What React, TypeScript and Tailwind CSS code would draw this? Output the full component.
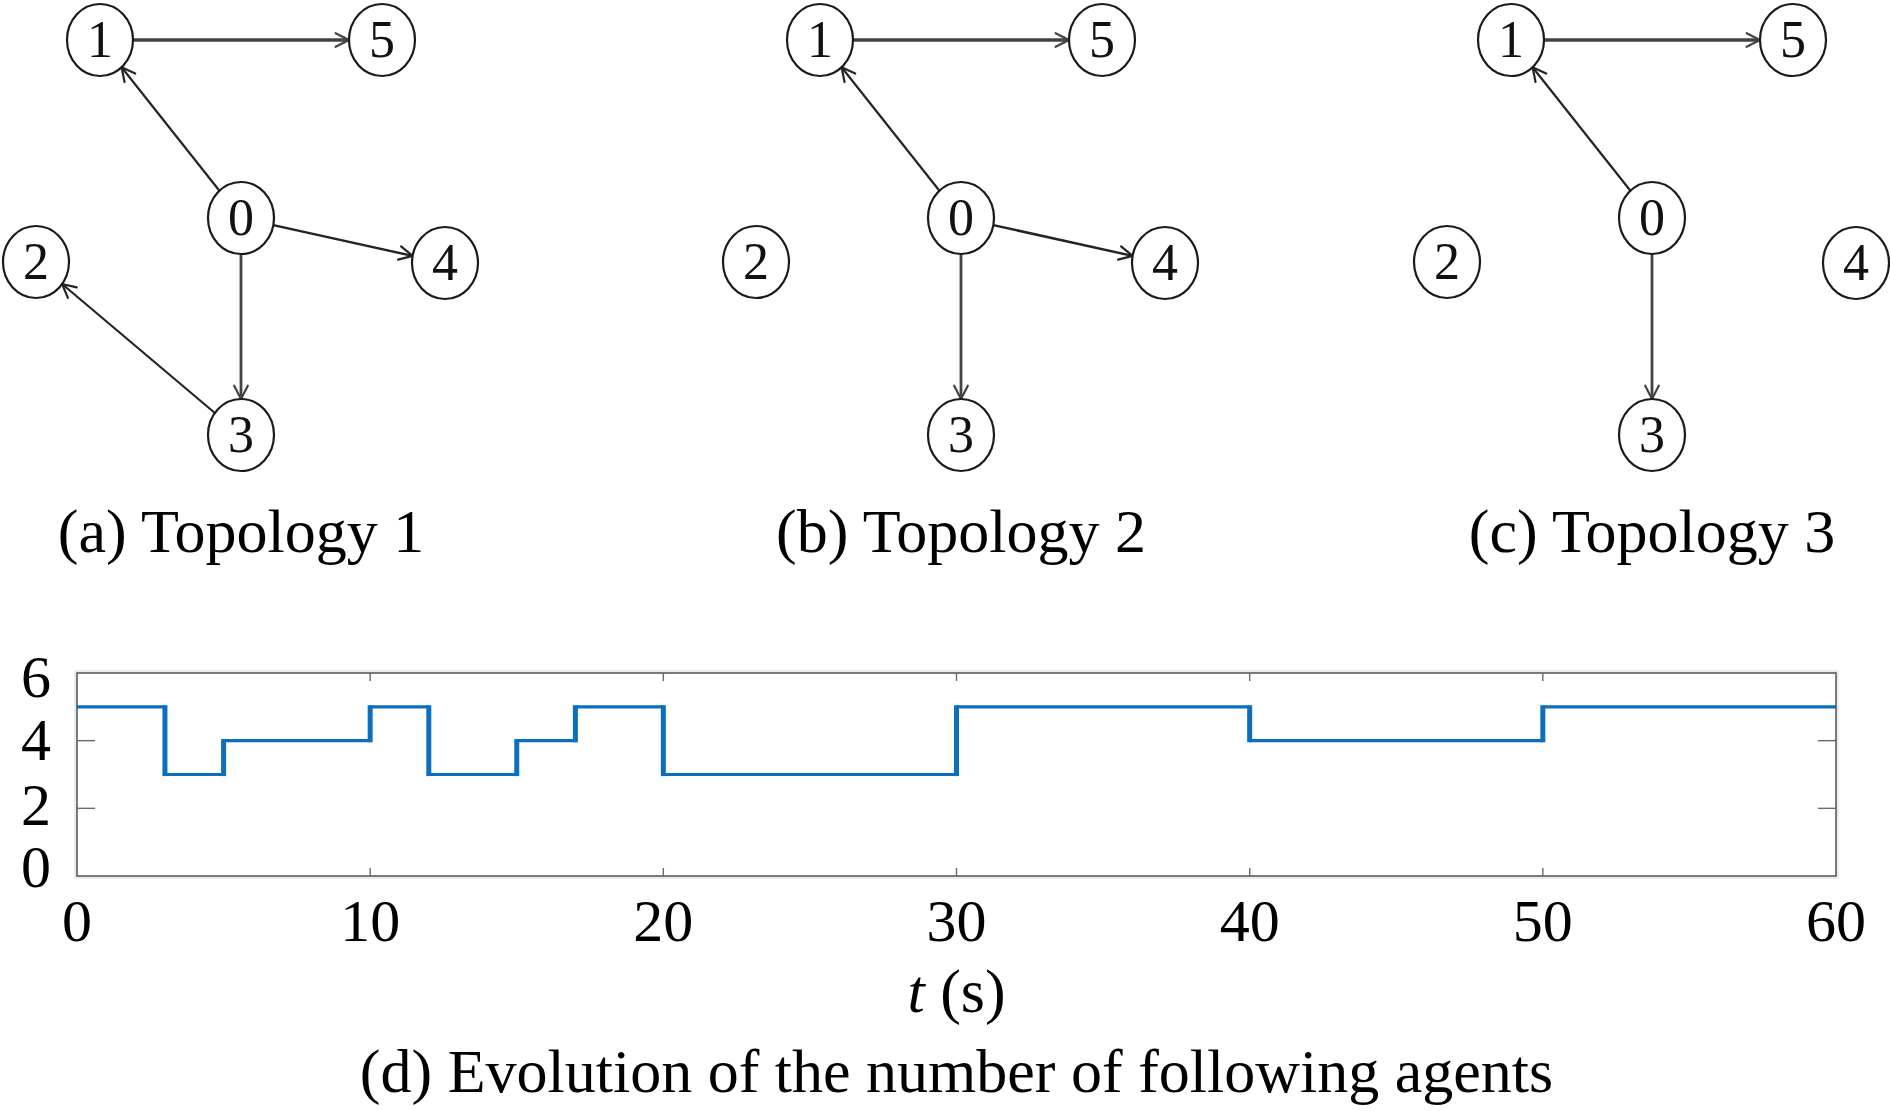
import React from "react";

type P = { x: number; y: number };
const RX = 33;
const RY = 36;

const NODES: Record<string, P> = {
  "1": { x: 100, y: 40 },
  "5": { x: 382, y: 40 },
  "0": { x: 241, y: 218 },
  "2": { x: 36, y: 262 },
  "4": { x: 445, y: 263 },
  "3": { x: 241, y: 435 },
};

function boundary(c: P, t: P): P {
  const dx = t.x - c.x;
  const dy = t.y - c.y;
  const k = 1 / Math.sqrt((dx / RX) ** 2 + (dy / RY) ** 2);
  return { x: c.x + dx * k, y: c.y + dy * k };
}

type E = { from: string; to: string; w: number; c: string };

function Edge({ e }: { e: E }) {
  const a = NODES[e.from];
  const b = NODES[e.to];
  const s = boundary(a, b);
  const t = boundary(b, a);
  const ang = Math.atan2(t.y - s.y, t.x - s.x);
  const L = 15;
  const sp = (27 * Math.PI) / 180;
  const p1 = { x: t.x - L * Math.cos(ang - sp), y: t.y - L * Math.sin(ang - sp) };
  const p2 = { x: t.x - L * Math.cos(ang + sp), y: t.y - L * Math.sin(ang + sp) };
  return (
    <g stroke={e.c} strokeWidth={e.w} fill="none" strokeLinecap="round">
      <line x1={s.x} y1={s.y} x2={t.x} y2={t.y} />
      <polyline points={`${p1.x},${p1.y} ${t.x},${t.y} ${p2.x},${p2.y}`} strokeWidth={2.2} strokeLinejoin="round" />
    </g>
  );
}

function Graph({ edges }: { edges: E[] }) {
  return (
    <svg width={482} height={500} className="block overflow-visible">
      {edges.map((e, i) => (
        <Edge key={i} e={e} />
      ))}
      {Object.entries(NODES).map(([k, p]) => (
        <g key={k}>
          <ellipse cx={p.x} cy={p.y} rx={RX} ry={RY} fill="white" stroke="#1a1a1a" strokeWidth={2.2} />
          <text
            x={p.x}
            y={p.y + 17}
            textAnchor="middle"
            fontSize={52}
            fontFamily="'Liberation Serif', 'Times New Roman', serif"
            fill="#111"
          >
            {k}
          </text>
        </g>
      ))}
    </svg>
  );
}

const THIN = "#242424";
const THICK = "#444444";

const EDGES_A: E[] = [
  { from: "1", to: "5", w: 3.6, c: THICK },
  { from: "0", to: "1", w: 2.2, c: THIN },
  { from: "0", to: "4", w: 2.5, c: THIN },
  { from: "0", to: "3", w: 2.8, c: THICK },
  { from: "3", to: "2", w: 2.2, c: THIN },
];
const EDGES_B: E[] = [
  { from: "1", to: "5", w: 3.6, c: THICK },
  { from: "0", to: "1", w: 2.2, c: THIN },
  { from: "0", to: "4", w: 2.5, c: THIN },
  { from: "0", to: "3", w: 2.8, c: THICK },
];
const EDGES_C: E[] = [
  { from: "1", to: "5", w: 3.6, c: THICK },
  { from: "0", to: "1", w: 2.2, c: THIN },
  { from: "0", to: "3", w: 2.8, c: THICK },
];

function Panel({ edges, caption, className }: { edges: E[]; caption: string; className: string }) {
  return (
    <div className={`flex w-[482px] shrink-0 flex-col items-center ${className}`}>
      <Graph edges={edges} />
      <div className="whitespace-nowrap text-[62px] leading-none">{caption}</div>
    </div>
  );
}

const X0 = 77;
const X1 = 1836;
const YT = 73;
const YB = 276;
const xs = (t: number) => X0 + ((X1 - X0) * t) / 60;
const ys = (v: number) => YB - ((YB - YT) * v) / 6;

const STEPS: [number, number, number][] = [
  [0, 3, 5],
  [3, 5, 3],
  [5, 10, 4],
  [10, 12, 5],
  [12, 15, 3],
  [15, 17, 4],
  [17, 20, 5],
  [20, 30, 3],
  [30, 40, 5],
  [40, 50, 4],
  [50, 60, 5],
];

function Chart() {
  const blue = "#0b6fbd";
  const font = "'Liberation Serif', 'Times New Roman', serif";
  return (
    <svg width={1890} height={360} className="block">
      <rect x={X0} y={YT} width={X1 - X0} height={YB - YT} fill="none" stroke="#ececec" strokeWidth={6} />
      <rect x={X0} y={YT} width={X1 - X0} height={YB - YT} fill="white" stroke="#5a5a5a" strokeWidth={1.6} />
      {[2, 4].map((v) => (
        <g key={v} stroke="#6a6a6a" strokeWidth={1.4}>
          <line x1={X0} y1={ys(v)} x2={X0 + 18} y2={ys(v)} />
          <line x1={X1 - 18} y1={ys(v)} x2={X1} y2={ys(v)} />
        </g>
      ))}
      {[10, 20, 30, 40, 50].map((t) => (
        <g key={t} stroke="#6a6a6a" strokeWidth={1.4}>
          <line x1={xs(t)} y1={YT} x2={xs(t)} y2={YT + 8} />
          <line x1={xs(t)} y1={YB - 8} x2={xs(t)} y2={YB} />
        </g>
      ))}
      {STEPS.map(([a, b, v], i) => (
        <line key={`h${i}`} x1={xs(a)} y1={ys(v)} x2={xs(b)} y2={ys(v)} stroke={blue} strokeWidth={3.2} />
      ))}
      {STEPS.slice(1).map(([a, , v], i) => (
        <line
          key={`v${i}`}
          x1={xs(a)}
          y1={ys(STEPS[i][2]) + (v > STEPS[i][2] ? 1.6 : -1.6)}
          x2={xs(a)}
          y2={ys(v) + (v > STEPS[i][2] ? -1.6 : 1.6)}
          stroke={blue}
          strokeWidth={5}
        />
      ))}
      {[
        ["6", 97],
        ["4", 160],
        ["2", 225],
        ["0", 287],
      ].map(([l, y]) => (
        <text key={l} x={36} y={y as number} textAnchor="middle" fontSize={60} fontFamily={font} fill="#000">
          {l}
        </text>
      ))}
      {[0, 10, 20, 30, 40, 50, 60].map((t) => (
        <text key={t} x={xs(t)} y={341} textAnchor="middle" fontSize={60} fontFamily={font} fill="#000">
          {t}
        </text>
      ))}
    </svg>
  );
}

export default function App() {
  return (
    <div className="h-[1111px] w-[1890px] overflow-hidden bg-white font-['Liberation_Serif','Times_New_Roman',serif] text-black">
      <div className="flex">
        <Panel edges={EDGES_A} caption="(a) Topology 1" className="" />
        <Panel edges={EDGES_B} caption="(b) Topology 2" className="ml-[238px]" />
        <Panel edges={EDGES_C} caption="(c) Topology 3" className="ml-[209px]" />
      </div>
      <div className="mt-[38px]">
        <Chart />
      </div>
      <div className="flex w-[1890px] flex-col items-center pl-[77px] pr-[54px]">
        <div className="whitespace-nowrap text-[62px] leading-none">
          <span className="italic">t</span> (s)
        </div>
        <div className="mt-[18px] whitespace-nowrap text-[62px] leading-none">
          (d) Evolution of the number of following agents
        </div>
      </div>
    </div>
  );
}
